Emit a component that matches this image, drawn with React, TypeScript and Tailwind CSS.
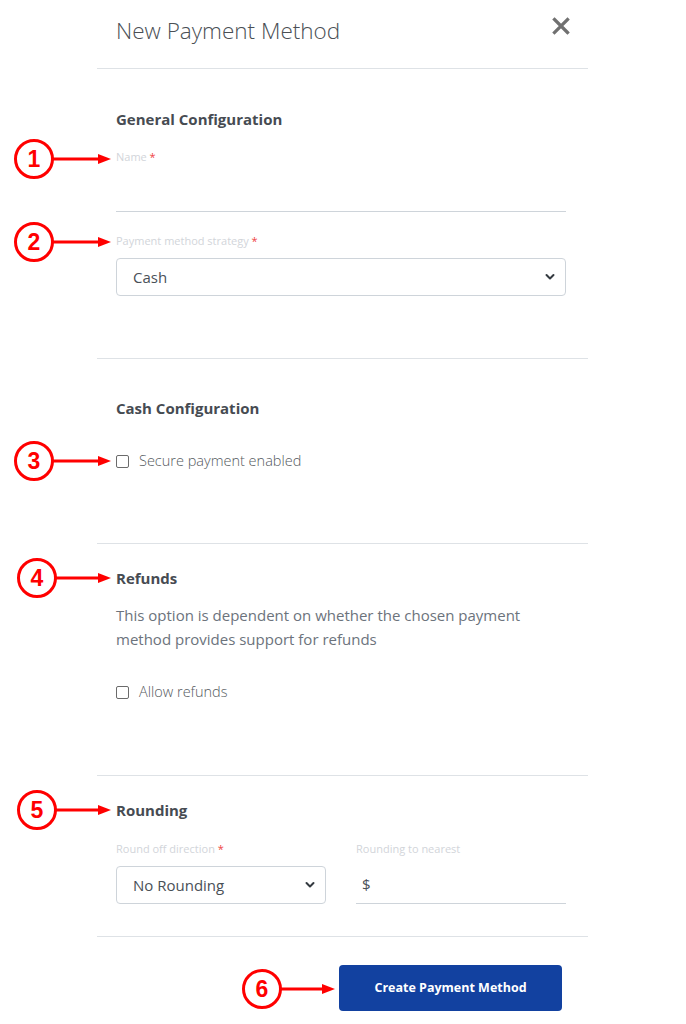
import React from 'react';

const font = { fontFamily: '"Open Sans", "Noto Sans", sans-serif' };

function Callout({ n, x, y, to }: { n: number; x: number; y: number; to: number }) {
  // red numbered circle with an arrow pointing right
  const len = to - x;
  return (
    <div className="absolute pointer-events-none" style={{ left: x - 21, top: y - 21 }}>
      <svg width={len + 22} height={42} viewBox={`0 0 ${len + 22} 42`}>
        <circle cx={21} cy={21} r={18.5} fill="white" stroke="#ff0000" strokeWidth={3} />
        <line x1={40} y1={21} x2={len + 21 - 12} y2={21} stroke="#ff0000" strokeWidth={3} />
        <polygon points={`${len + 21},21 ${len + 21 - 13},16 ${len + 21 - 13},26`} fill="#ff0000" />
      </svg>
      <span
        className="absolute left-0 top-0 w-[42px] h-[42px] flex items-center justify-center text-[23px] font-bold text-[#ff0000]"
        style={{ fontFamily: '"Liberation Sans", Arial, sans-serif' }}
      >
        {n}
      </span>
    </div>
  );
}

function Label({ text, required }: { text: string; required?: boolean }) {
  return (
    <div className="text-[11px] leading-[16px] text-[#d2d5da]">
      {text}
      {required && <span className="text-[#ef4444]"> *</span>}
    </div>
  );
}

function Chevron() {
  return (
    <svg width="10" height="7" viewBox="0 0 10 7" className="absolute right-[10px] top-1/2 -translate-y-1/2">
      <path d="M1.5 1.5 L5 5 L8.5 1.5" fill="none" stroke="#343a40" strokeWidth="2" strokeLinecap="round" strokeLinejoin="round" />
    </svg>
  );
}

function FakeSelect({ value }: { value: string }) {
  return (
    <div className="relative h-[38px] border border-[#ced4da] rounded-[4px] flex items-center pl-[16px] text-[15px] text-[#495057]">
      {value}
      <Chevron />
    </div>
  );
}

function Check({ label }: { label: string }) {
  return (
    <div className="flex items-center h-[20px] gap-[10px]">
      <span className="w-[13px] h-[13px] border border-[#6b6b6b] rounded-[2px] bg-white" />
      <span className="text-[14.5px] font-light text-[#555a60]">{label}</span>
    </div>
  );
}

function Heading({ children }: { children: React.ReactNode }) {
  return <h3 className="text-[15px] leading-[20px] font-bold text-[#464b52]">{children}</h3>;
}

export default function App() {
  return (
    <div className="relative w-full h-[1024px] bg-white overflow-hidden" style={font}>
      <div className="ml-[97px] w-[491px]">
        <div className="h-[69px] border-b border-[#dee2e6] flex items-start justify-between pl-[19px] pr-[18px] pt-[15px]">
          <h2 className="text-[22.5px] leading-[32px] font-light text-[#4a4f55]">New Payment Method</h2>
          <svg width="18" height="18" viewBox="0 0 18 18" className="mt-[2px]">
            <path d="M2.5 2.5 L15.5 15.5 M15.5 2.5 L2.5 15.5" stroke="#707070" strokeWidth="3.2" strokeLinecap="square" />
          </svg>
        </div>

        <section className="border-b border-[#dee2e6] pl-[19px] pr-[22px] pt-[40px] pb-[62px]">
          <Heading>General Configuration</Heading>
          <div className="mt-[20px]">
            <Label text="Name" required />
            <div className="mt-[8px] h-[39px] border-b border-[#ced4da]" />
          </div>
          <div className="mt-[21px]">
            <Label text="Payment method strategy" required />
            <div className="mt-[9px]">
              <FakeSelect value="Cash" />
            </div>
          </div>
        </section>

        <section className="border-b border-[#dee2e6] pl-[19px] pr-[22px] pt-[39px] pb-[72px]">
          <Heading>Cash Configuration</Heading>
          <div className="mt-[33px]">
            <Check label="Secure payment enabled" />
          </div>
        </section>

        <section className="border-b border-[#dee2e6] pl-[19px] pr-[22px] pt-[24px] pb-[73px]">
          <Heading>Refunds</Heading>
          <p className="mt-[15px] text-[15px] leading-[24px] text-[#6c737c]">
            This option is dependent on whether the chosen payment method provides support for refunds
          </p>
          <div className="mt-[31px]">
            <Check label="Allow refunds" />
          </div>
        </section>

        <section className="border-b border-[#dee2e6] pl-[19px] pr-[22px] pt-[24px] pb-[32px]">
          <Heading>Rounding</Heading>
          <div className="mt-[21px] grid grid-cols-2 gap-x-[30px]">
            <div>
              <Label text="Round off direction" required />
              <div className="mt-[9px]">
                <FakeSelect value="No Rounding" />
              </div>
            </div>
            <div>
              <Label text="Rounding to nearest" />
              <div className="mt-[9px] h-[38px] border-b border-[#ced4da] flex items-center pl-[6px] text-[15px] text-[#495057]">
                $
              </div>
            </div>
          </div>
        </section>

        <div className="flex justify-end pr-[26px] pt-[28px]">
          <button className="w-[223px] h-[46px] rounded-[4px] bg-[#1241a0] text-white text-[12.5px] font-bold">
            Create Payment Method
          </button>
        </div>
      </div>

      <Callout n={1} x={34} y={159} to={111} />
      <Callout n={2} x={34} y={242} to={111} />
      <Callout n={3} x={34} y={461} to={111} />
      <Callout n={4} x={37} y={578} to={111} />
      <Callout n={5} x={37} y={810} to={111} />
      <Callout n={6} x={262} y={989} to={335} />
    </div>
  );
}
